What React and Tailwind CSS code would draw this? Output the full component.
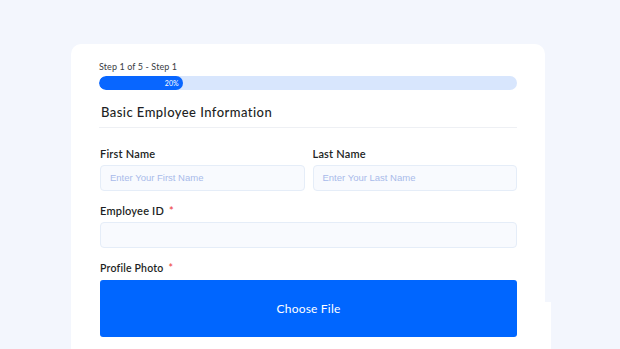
import React from 'react';

function Field({ label, required, placeholder }) {
  return (
    <div className="flex flex-col">
      <label className="block text-[11px] leading-[14px] font-semibold text-[#1d1f24] tracking-[0.2px]">
        {label}
        {required && <span className="ml-[5px] text-[#ee4b4b]">*</span>}
      </label>
      <div className="mt-[4px] h-[26px] rounded-[4px] border border-[#e5edf8] bg-[#f8fafe] pl-[9px] flex items-center">
        <span className="text-[9.5px] text-[#a9bbea] font-['Liberation_Sans',sans-serif]">{placeholder}</span>
      </div>
    </div>
  );
}

export default function App() {
  return (
    <div className="relative w-[620px] h-[349px] overflow-hidden bg-[#f3f6fd] pt-[44px] pl-[71px] font-['Lato',sans-serif]">
      {/* strip peeking out at the bottom right */}
      <div className="absolute left-[520px] top-[302px] w-[31px] h-[60px] bg-white" />

      <div className="relative w-[474px] h-[330px] rounded-[10px] bg-white px-[28px] pt-[17px]">
        {/* Progress */}
        <p className="text-[9px] leading-[12px] text-[#3a3d44] tracking-[0.1px]">Step 1 of 5 - Step 1</p>
        <div className="mt-[3px] h-[14px] w-full rounded-full bg-[#d8e6fd] overflow-hidden">
          <div className="h-full w-[20%] rounded-full bg-[#0866ff] flex items-center justify-end pr-[4px]">
            <span className="text-[7px] text-white">20%</span>
          </div>
        </div>

        {/* Heading */}
        <div className="mt-[12px] pb-[5px] border-b border-[#eef0f4] pl-[2px]">
          <h2 className="text-[13px] leading-[20px] font-medium text-[#1d1f24] tracking-[0.45px]">
            Basic Employee Information
          </h2>
        </div>

        <div className="pl-[1px]">
          <div className="mt-[19px] grid grid-cols-2 gap-[8px]">
            <Field label="First Name" placeholder="Enter Your First Name" />
            <Field label="Last Name" placeholder="Enter Your Last Name" />
          </div>

          <div className="mt-[13px]">
            <Field label="Employee ID" required placeholder="" />
          </div>

          <div className="mt-[13px]">
            <label className="block text-[10.5px] leading-[14px] font-semibold text-[#1d1f24] tracking-[0.2px]">
              Profile Photo<span className="ml-[5px] text-[#ee4b4b]">*</span>
            </label>
            <button className="block mt-[5px] h-[57px] w-full rounded-[3px] bg-[#0066ff] text-white text-[12px] tracking-[0.2px]">
              Choose File
            </button>
          </div>
        </div>
      </div>
    </div>
  );
}
